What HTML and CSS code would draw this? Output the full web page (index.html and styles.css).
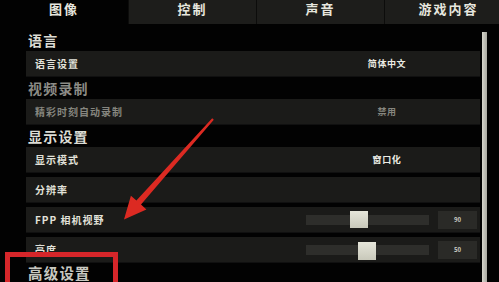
FILE: index.html
```html
<!DOCTYPE html>
<html lang="zh">
<head>
<meta charset="utf-8">
<link rel="stylesheet" href="styles.css">
</head>
<body>
<div class="screen">
  <nav class="tabs">
    <div class="tab active">图像</div>
    <div class="tab">控制</div>
    <div class="tab">声音</div>
    <div class="tab">游戏内容</div>
  </nav>
  <div class="body">
    <div class="list">
      <div class="heading">语言</div>
      <div class="row"><span class="label">语言设置</span><span class="value">简体中文</span></div>
      <div class="heading dim">视频录制</div>
      <div class="row dim"><span class="label">精彩时刻自动录制</span><span class="value">禁用</span></div>
      <div class="heading">显示设置</div>
      <div class="row gap"><span class="label">显示模式</span><span class="value">窗口化</span></div>
      <div class="row gap"><span class="label">分辨率</span></div>
      <div class="row gap"><span class="label">FPP 相机视野</span>
        <div class="slider"><div class="track"><div class="thumb t90"></div></div><div class="num">90</div></div>
      </div>
      <div class="row"><span class="label">亮度</span>
        <div class="slider"><div class="track"><div class="thumb t50"></div></div><div class="num">50</div></div>
      </div>
      <div class="heading last">高级设置</div>
    </div>
    <div class="scrollbar"></div>
  </div>
  <div class="redbox"></div>
  <svg class="arrow" width="499" height="282" viewBox="0 0 499 282">
    <polygon points="212.2,118.3 213.8,119.7 141,204.6 146.4,209.4 124,219.5 130.9,195.8 136.4,200.6" fill="#dc2a22"/>
  </svg>
</div>
</body>
</html>
```
FILE: styles.css
```css
* { box-sizing: border-box; }
html, body { margin: 0; padding: 0; background: #000; }
body { width: 499px; height: 282px; overflow: hidden; font-family: "Noto Sans CJK SC", "Noto Sans", sans-serif; }
.screen { position: relative; width: 499px; height: 282px; overflow: hidden; background: #020202; }
.tabs { display: flex; height: 24px; width: 512px; }
.tab { width: 128px; flex: none; background: #1d1d1b; color: #e6e6de; font-size: 13px; font-weight: 700; letter-spacing: 2px; text-align: center; line-height: 18px; border-left: 1px solid #0c0c0b; }
.tab.active { background: #020202; border-left: none; }
.body { display: flex; padding-left: 26px; }
.list { width: 454px; padding-top: 5px; }
.scrollbar { width: 5px; margin-left: 2px; margin-top: 8px; height: 260px; background: linear-gradient(90deg, #d6d6cc, #a8a8a0); }
.heading { height: 22px; line-height: 22px; font-size: 14px; font-weight: 700; letter-spacing: 1.2px; color: #dcdcd4; padding-left: 2px; }
.heading.dim { color: #8c8c86; }
.heading.last { color: #c8c8c0; font-size: 14.5px; line-height: 19px; }
.row { display: flex; align-items: center; height: 26px; background: #1b1b19; border-bottom: 1px solid #101010; padding-left: 9px; }
.row.gap { margin-bottom: 4px; }
.label { flex: 1; font-size: 10px; font-weight: 700; letter-spacing: 1px; color: #e2e2da; }
.row.dim .label, .row.dim .value { color: #86867f; }
.value { width: 150px; margin-right: 18px; text-align: center; font-size: 9px; font-weight: 700; letter-spacing: 0.6px; color: #ecece4; }
.slider { display: flex; align-items: center; margin-right: 3px; }
.track { position: relative; width: 123px; height: 10px; background: #2e2e2b; }
.thumb { position: absolute; top: -4px; width: 18px; height: 17px; background: linear-gradient(180deg, #e6e6da, #c8c8ba); }
.thumb.t90 { left: 44px; }
.thumb.t50 { left: 52px; top: -3px; height: 18px; }
.num { width: 39px; height: 18px; margin-left: 9px; background: #2a2a27; color: #cfcfc6; font-size: 6px; font-weight: 700; text-align: center; line-height: 18px; }
.redbox { position: absolute; left: 5px; top: 252px; width: 113px; height: 40px; border: 5px solid #d6262a; }
.arrow { position: absolute; left: 0; top: 0; }
```
